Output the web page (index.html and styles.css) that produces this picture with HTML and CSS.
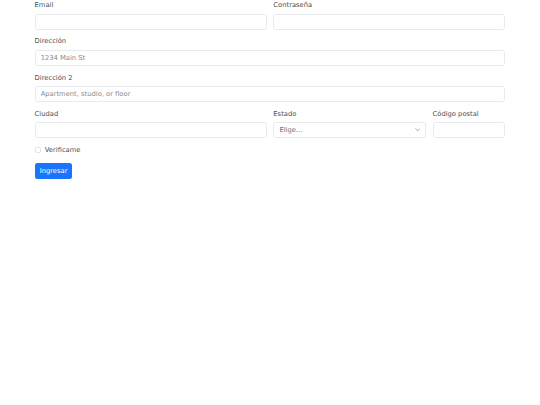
FILE: index.html
```html
<!DOCTYPE html>
<html lang="es">
<head>
<meta charset="utf-8">
<title>Formulario</title>
<link rel="stylesheet" href="styles.css">
</head>
<body>
<div class="container">
  <form class="form-grid">
    <div class="col-6">
      <label class="form-label" for="email">Email</label>
      <input class="form-control" type="email" id="email">
    </div>
    <div class="col-6">
      <label class="form-label" for="pass">Contraseña</label>
      <input class="form-control" type="password" id="pass">
    </div>
    <div class="col-12">
      <label class="form-label" for="addr">Dirección</label>
      <input class="form-control" type="text" id="addr" placeholder="1234 Main St">
    </div>
    <div class="col-12">
      <label class="form-label" for="addr2">Dirección 2</label>
      <input class="form-control" type="text" id="addr2" placeholder="Apartment, studio, or floor">
    </div>
    <div class="col-6">
      <label class="form-label" for="city">Ciudad</label>
      <input class="form-control" type="text" id="city">
    </div>
    <div class="col-4">
      <label class="form-label" for="state">Estado</label>
      <div class="select-wrap">
        <select class="form-select" id="state">
          <option selected>Elige...</option>
          <option>...</option>
        </select>
        <svg class="chevron" viewBox="0 0 16 16" aria-hidden="true"><path d="m2 5 6 6 6-6" fill="none" stroke="#7d8185" stroke-width="2" stroke-linecap="round" stroke-linejoin="round"/></svg>
      </div>
    </div>
    <div class="col-2">
      <label class="form-label" for="zip">Código postal</label>
      <input class="form-control" type="text" id="zip">
    </div>
    <div class="col-12">
      <div class="form-check">
        <input class="form-check-input" type="checkbox" id="check">
        <label class="form-check-label" for="check">Verificame</label>
      </div>
    </div>
    <div class="col-12">
      <button type="submit" class="btn">Ingresar</button>
    </div>
  </form>
</div>
</body>
</html>
```

FILE: styles.css
```css
* { box-sizing: border-box; }

html, body {
  margin: 0;
  padding: 0;
  background: #fff;
}

body {
  font-family: "DejaVu Sans", "Noto Sans", sans-serif;
  font-size: 6.75px;
  line-height: 1.5;
  color: #4a4e52;
}

.container {
  width: 470.8px;
  margin: 0 auto;
}

.form-grid {
  display: grid;
  grid-template-columns: repeat(12, 1fr);
  column-gap: 6.75px;
  row-gap: 6.75px;
}

.col-12 { grid-column: span 12; }
.col-6 { grid-column: span 6; }
.col-4 { grid-column: span 4; }
.col-2 { grid-column: span 2; }

.form-label {
  display: block;
  margin-bottom: 3.375px;
  line-height: 10.125px;
}

.form-control,
.form-select {
  display: block;
  width: 100%;
  height: 16px;
  padding: 0 5.06px;
  font: inherit;
  font-size: 6.75px;
  line-height: 10.125px;
  color: #4a4e52;
  background: #fff;
  border: 1px solid #e8eaed;
  border-radius: 2.5px;
  outline: none;
}

.form-control::placeholder {
  color: #888b8e;
  opacity: 1;
}

.select-wrap {
  position: relative;
}

.form-select {
  appearance: none;
  -webkit-appearance: none;
  padding-right: 15px;
  color: #6a6e72;
}

.chevron {
  position: absolute;
  right: 5.5px;
  top: 5px;
  width: 5.5px;
  height: 5.5px;
  pointer-events: none;
}

.form-check {
  display: flex;
  align-items: flex-start;
  min-height: 10.125px;
  margin-bottom: 0.84px;
  line-height: 10.125px;
}

.form-check-input {
  appearance: none;
  -webkit-appearance: none;
  width: 6.75px;
  height: 6.75px;
  margin: 1.69px 3.4px 0 0;
  border: 1px solid #dfe2e5;
  border-radius: 1.69px;
  background: #fff;
  flex: none;
}

.btn {
  display: inline-block;
  height: 16px;
  padding: 0 5.06px;
  font: inherit;
  font-size: 6.75px;
  line-height: 10.125px;
  color: #fff;
  background: #1a75fd;
  border: none;
  border-radius: 2.5px;
}
```
